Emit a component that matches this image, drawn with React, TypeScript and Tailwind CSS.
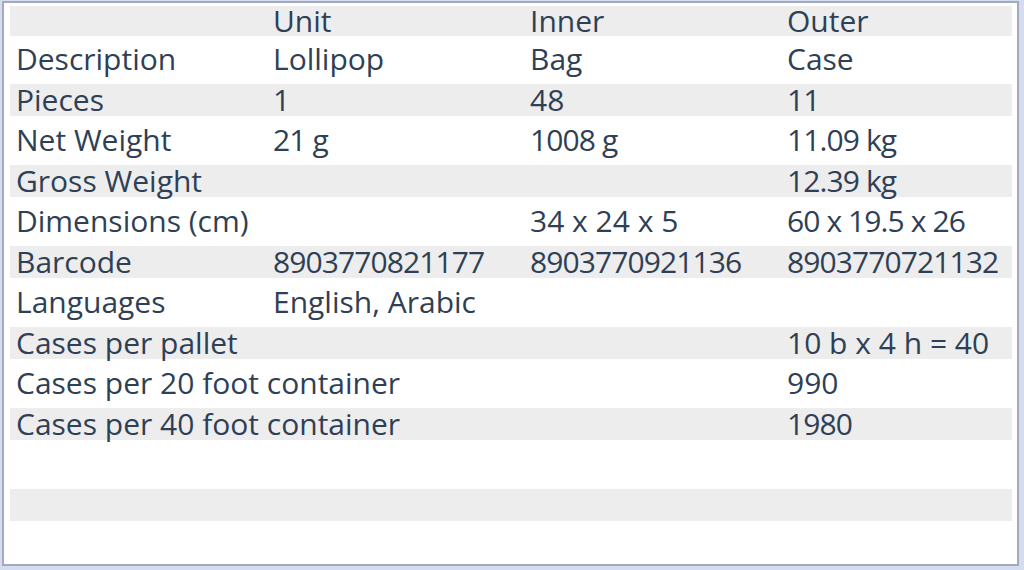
const rows: string[][] = [
  ['Description', 'Lollipop', 'Bag', 'Case'],
  ['Pieces', '1', '48', '11'],
  ['Net Weight', '21 g', '1008 g', '11.09 kg'],
  ['Gross Weight', '', '', '12.39 kg'],
  ['Dimensions (cm)', '', '34 x 24 x 5', '60 x 19.5 x 26'],
  ['Barcode', '8903770821177', '8903770921136', '8903770721132'],
  ['Languages', 'English, Arabic', '', ''],
  ['Cases per pallet', '', '', '10 b x 4 h = 40'],
  ['Cases per 20 foot container', '', '', '990'],
  ['Cases per 40 foot container', '', '', '1980'],
  ['', '', '', ''],
  ['', '', '', ''],
];

const tight = (c: string) => /^[\d\s.xkg]+$/.test(c) && c.includes('1');

function Row({ cells, striped }: { cells: string[]; striped: boolean }) {
  return (
    <div
      className={
        'grid h-[40.5px] shrink-0 grid-cols-[257px_257px_257px_1fr] items-center border-y-4 border-white ' +
        (striped ? 'bg-[#ededed]' : 'bg-white')
      }
    >
      {cells.map((c, i) => (
        <div
          key={i}
          className={'whitespace-nowrap pl-[6px] ' + (i > 0 && tight(c) ? 'tracking-[-0.9px]' : '')}
        >
          {c}
        </div>
      ))}
    </div>
  );
}

export default function App() {
  return (
    <div className="h-[570px] w-[1024px] bg-[#d5dcf0] pl-[2px] pt-[1px]">
      <div
        className="flex h-[565px] w-[1017px] flex-col border-2 border-[#a2aabf] bg-white pl-[6px] pr-[5px] text-[30px] leading-none text-[#2f3f55]"
        style={{ fontFamily: '"Open Sans", "Liberation Sans", sans-serif' }}
      >
        {/* Header */}
        <div className="grid h-[36px] shrink-0 grid-cols-[257px_257px_257px_1fr] items-center border-y-[3px] border-white bg-[#ededed]">
          <div />
          <div className="pl-[6px]">Unit</div>
          <div className="pl-[6px]">Inner</div>
          <div className="pl-[6px]">Outer</div>
        </div>

        {rows.map((r, i) => (
          <Row key={i} cells={r} striped={i % 2 === 1} />
        ))}

        <div className="flex-1 bg-white" />
      </div>
    </div>
  );
}
